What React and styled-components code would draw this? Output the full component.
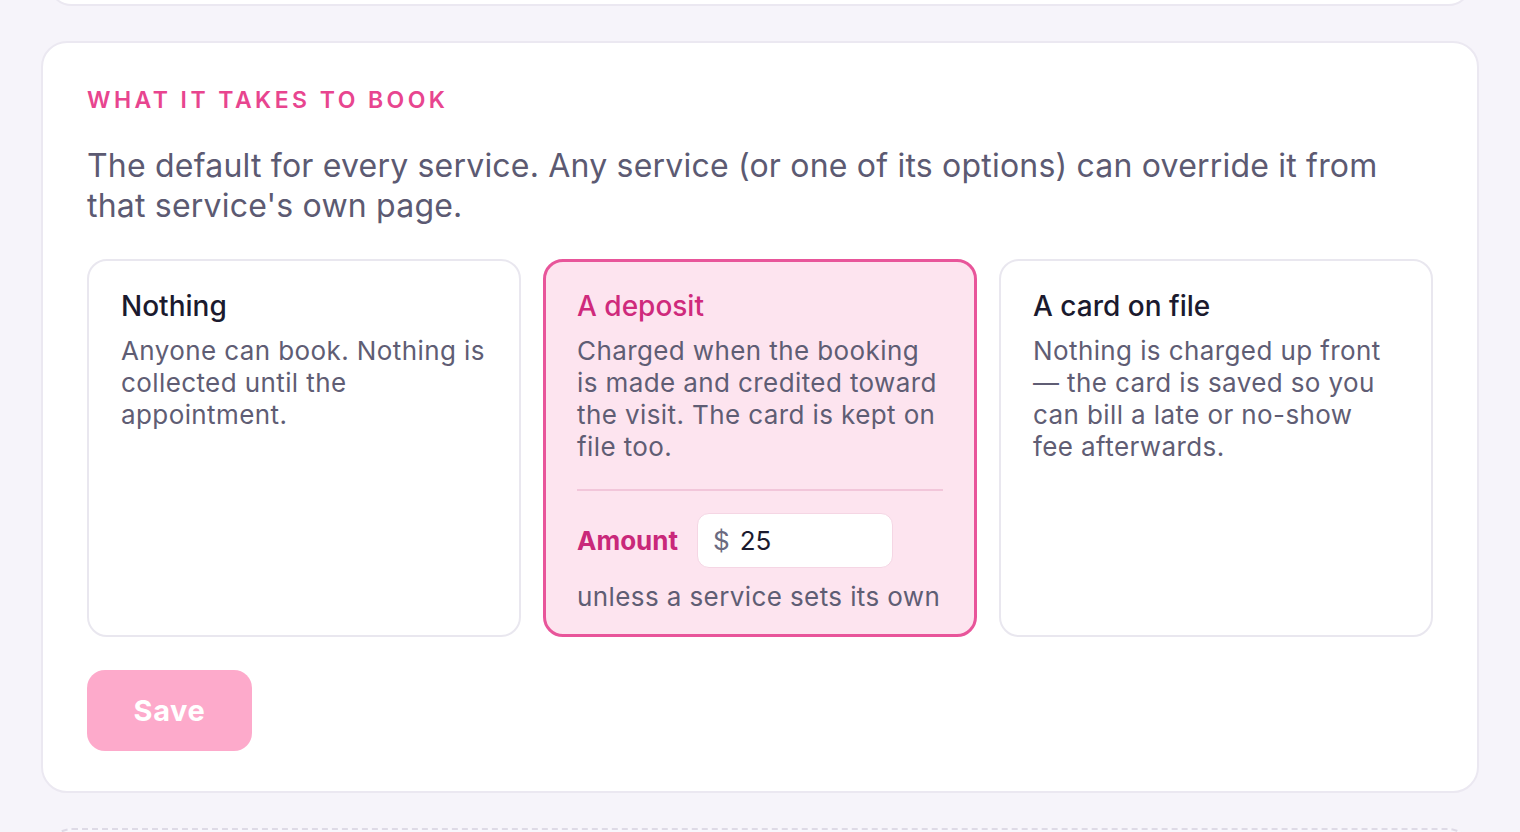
import React, { useState } from "react";
import styled, { createGlobalStyle } from "styled-components";

const Global = createGlobalStyle`
  html, body { margin: 0; padding: 0; }
  body {
    background: #f6f4fa;
    font-family: Inter, "Noto Sans", sans-serif;
    -webkit-font-smoothing: antialiased;
  }
  * { box-sizing: border-box; }
`;

const Page = styled.div`
  height: 832px;
  overflow: hidden;
  padding: 0 48px;
  display: flex;
  flex-direction: column;
  gap: 35px;
`;

const PrevCard = styled.div`
  margin-top: -41px;
  height: 47px;
  flex: none;
  background: #fff;
  border: 2px solid #ebe8f1;
  border-radius: 24px;
`;

const Section = styled.section`
  flex: none;
  margin: 0 -7px;
  background: #fff;
  border: 2px solid #ebe8f1;
  border-radius: 26px;
  padding: 44px 44px 40px;
`;

const NextCard = styled.div`
  flex: none;
  height: 120px;
  border: 2px dashed #dedae6;
  border-radius: 24px;
  background: #f8f7fc;
`;

const Eyebrow = styled.h2`
  margin: 0;
  font-size: 23px;
  line-height: 26px;
  font-weight: 600;
  letter-spacing: 0.15em;
  text-transform: uppercase;
  color: #e8458f;
`;

const Lead = styled.p`
  margin: 33px 0 0;
  font-size: 32px;
  line-height: 40px;
  color: #5c5a72;
  letter-spacing: 0.2px;
`;

const Options = styled.div`
  margin-top: 33px;
  display: grid;
  grid-template-columns: repeat(3, 1fr);
  gap: 22px;
`;

const Option = styled.div`
  cursor: pointer;
  display: flex;
  flex-direction: column;
  align-items: stretch;
  border-radius: 20px;
  border: ${(p) => (p.$active ? "3px solid #e8559a" : "2px solid #e9e7ef")};
  background: ${(p) => (p.$active ? "#fde4ef" : "#fff")};
  padding: ${(p) => (p.$active ? "27px 31px 21px" : "28px 32px 22px")};
  min-height: 378px;
`;

const OptionTitle = styled.div`
  font-size: 28px;
  line-height: 34px;
  font-weight: 500;
  color: ${(p) => (p.$active ? "#cf2a7c" : "#1b1a2e")};
`;

const OptionText = styled.div`
  margin-top: 12px;
  font-size: 26px;
  line-height: 32px;
  color: #5f5d74;
  letter-spacing: 0.4px;
`;

const Divider = styled.hr`
  margin: 26px 0 0;
  border: none;
  height: 2px;
  background: #f2c6da;
`;

const AmountRow = styled.div`
  margin-top: 22px;
  display: flex;
  align-items: center;
  gap: 19px;
`;

const AmountLabel = styled.label`
  font-size: 26px;
  font-weight: 700;
  color: #c9287a;
`;

const AmountBox = styled.div`
  width: 196px;
  height: 55px;
  display: flex;
  align-items: center;
  gap: 10px;
  padding: 0 15px;
  background: #fff;
  border: 1px solid #f5d6e4;
  border-radius: 12px;
`;

const Currency = styled.span`
  font-size: 26px;
  color: #6b6a80;
`;

const AmountInput = styled.input`
  border: none;
  outline: none;
  background: transparent;
  width: 100%;
  font: inherit;
  font-size: 26px;
  color: #1b1a2e;
  padding: 0;
`;

const Hint = styled.div`
  margin-top: 13px;
  font-size: 26px;
  line-height: 32px;
  color: #5f5d74;
  letter-spacing: 0.4px;
  white-space: nowrap;
`;

const SaveButton = styled.button`
  margin-top: 33px;
  width: 165px;
  height: 81px;
  border: none;
  border-radius: 18px;
  background: #fdaacb;
  color: #fff;
  font: inherit;
  font-size: 29px;
  font-weight: 700;
  letter-spacing: 0.02em;
  cursor: not-allowed;
`;

const options = [
  {
    id: "none",
    title: "Nothing",
    text: "Anyone can book. Nothing is collected until the appointment.",
  },
  {
    id: "deposit",
    title: "A deposit",
    text: "Charged when the booking is made and credited toward the visit. The card is kept on file too.",
  },
  {
    id: "card",
    title: "A card on file",
    text: "Nothing is charged up front — the card is saved so you can bill a late or no-show fee afterwards.",
  },
];

export default function App() {
  const [selected, setSelected] = useState("deposit");
  const [amount, setAmount] = useState("25");
  return (
    <>
      <Global />
      <Page>
        <PrevCard />
        <Section>
          <Eyebrow>What it takes to book</Eyebrow>
          <Lead>
            The default for every service. Any service (or one of its options) can override it from
            that service's own page.
          </Lead>
          <Options>
            {options.map((o) => {
              const active = o.id === selected;
              return (
                <Option key={o.id} $active={active} onClick={() => setSelected(o.id)}>
                  <OptionTitle $active={active}>{o.title}</OptionTitle>
                  <OptionText>{o.text}</OptionText>
                  {active && o.id === "deposit" && (
                    <>
                      <Divider />
                      <AmountRow>
                        <AmountLabel htmlFor="amt">Amount</AmountLabel>
                        <AmountBox>
                          <Currency>$</Currency>
                          <AmountInput
                            id="amt"
                            value={amount}
                            onChange={(e) => setAmount(e.target.value)}
                          />
                        </AmountBox>
                      </AmountRow>
                      <Hint>unless a service sets its own</Hint>
                    </>
                  )}
                </Option>
              );
            })}
          </Options>
          <SaveButton disabled>Save</SaveButton>
        </Section>
        <NextCard />
      </Page>
    </>
  );
}
